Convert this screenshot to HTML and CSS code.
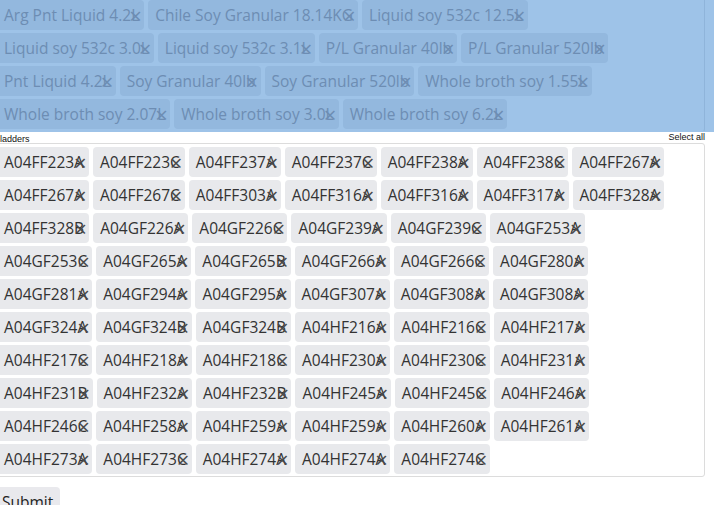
FILE: index.html
```html
<!DOCTYPE html>
<html lang="en">
<head>
<meta charset="utf-8">
<title>Products</title>
<link rel="stylesheet" href="styles.css">
</head>
<body>
<form class="page">
  <div class="picked">
    <div class="tagbox tagbox-picked">
      <span class="tag">Arg Pnt Liquid 4.2L<span class="x">×</span></span>
      <span class="tag">Chile Soy Granular 18.14KG<span class="x">×</span></span>
      <span class="tag">Liquid soy 532c 12.5L<span class="x">×</span></span>
      <span class="tag">Liquid soy 532c 3.0L<span class="x">×</span></span>
      <span class="tag">Liquid soy 532c 3.1L<span class="x">×</span></span>
      <span class="tag">P/L Granular 40lb<span class="x">×</span></span>
      <span class="tag">P/L Granular 520lb<span class="x">×</span></span>
      <span class="tag">Pnt Liquid 4.2L<span class="x">×</span></span>
      <span class="tag">Soy Granular 40lb<span class="x">×</span></span>
      <span class="tag">Soy Granular 520lb<span class="x">×</span></span>
      <span class="tag">Whole broth soy 1.55L<span class="x">×</span></span>
      <span class="tag">Whole broth soy 2.07L<span class="x">×</span></span>
      <span class="tag">Whole broth soy 3.0L<span class="x">×</span></span>
      <span class="tag">Whole broth soy 6.2L<span class="x">×</span></span>
    </div>
  </div>

  <div class="field-head">
    <span class="field-label">ladders</span>
    <a class="select-all">Select all</a>
  </div>
  <div class="tagbox tagbox-ladders">
    <span class="tag">A04FF223A<span class="x">×</span></span>
    <span class="tag">A04FF223C<span class="x">×</span></span>
    <span class="tag">A04FF237A<span class="x">×</span></span>
    <span class="tag">A04FF237C<span class="x">×</span></span>
    <span class="tag">A04FF238A<span class="x">×</span></span>
    <span class="tag">A04FF238C<span class="x">×</span></span>
    <span class="tag">A04FF267A<span class="x">×</span></span>
    <span class="tag">A04FF267A<span class="x">×</span></span>
    <span class="tag">A04FF267C<span class="x">×</span></span>
    <span class="tag">A04FF303A<span class="x">×</span></span>
    <span class="tag">A04FF316A<span class="x">×</span></span>
    <span class="tag">A04FF316A<span class="x">×</span></span>
    <span class="tag">A04FF317A<span class="x">×</span></span>
    <span class="tag">A04FF328A<span class="x">×</span></span>
    <span class="tag">A04FF328B<span class="x">×</span></span>
    <span class="tag">A04GF226A<span class="x">×</span></span>
    <span class="tag">A04GF226C<span class="x">×</span></span>
    <span class="tag">A04GF239A<span class="x">×</span></span>
    <span class="tag">A04GF239C<span class="x">×</span></span>
    <span class="tag">A04GF253A<span class="x">×</span></span>
    <span class="tag">A04GF253C<span class="x">×</span></span>
    <span class="tag">A04GF265A<span class="x">×</span></span>
    <span class="tag">A04GF265B<span class="x">×</span></span>
    <span class="tag">A04GF266A<span class="x">×</span></span>
    <span class="tag">A04GF266C<span class="x">×</span></span>
    <span class="tag">A04GF280A<span class="x">×</span></span>
    <span class="tag">A04GF281A<span class="x">×</span></span>
    <span class="tag">A04GF294A<span class="x">×</span></span>
    <span class="tag">A04GF295A<span class="x">×</span></span>
    <span class="tag">A04GF307A<span class="x">×</span></span>
    <span class="tag">A04GF308A<span class="x">×</span></span>
    <span class="tag">A04GF308A<span class="x">×</span></span>
    <span class="tag">A04GF324A<span class="x">×</span></span>
    <span class="tag">A04GF324B<span class="x">×</span></span>
    <span class="tag">A04GF324B<span class="x">×</span></span>
    <span class="tag">A04HF216A<span class="x">×</span></span>
    <span class="tag">A04HF216C<span class="x">×</span></span>
    <span class="tag">A04HF217A<span class="x">×</span></span>
    <span class="tag">A04HF217C<span class="x">×</span></span>
    <span class="tag">A04HF218A<span class="x">×</span></span>
    <span class="tag">A04HF218C<span class="x">×</span></span>
    <span class="tag">A04HF230A<span class="x">×</span></span>
    <span class="tag">A04HF230C<span class="x">×</span></span>
    <span class="tag">A04HF231A<span class="x">×</span></span>
    <span class="tag">A04HF231B<span class="x">×</span></span>
    <span class="tag">A04HF232A<span class="x">×</span></span>
    <span class="tag">A04HF232B<span class="x">×</span></span>
    <span class="tag">A04HF245A<span class="x">×</span></span>
    <span class="tag">A04HF245C<span class="x">×</span></span>
    <span class="tag">A04HF246A<span class="x">×</span></span>
    <span class="tag">A04HF246C<span class="x">×</span></span>
    <span class="tag">A04HF258A<span class="x">×</span></span>
    <span class="tag">A04HF259A<span class="x">×</span></span>
    <span class="tag">A04HF259A<span class="x">×</span></span>
    <span class="tag">A04HF260A<span class="x">×</span></span>
    <span class="tag">A04HF261A<span class="x">×</span></span>
    <span class="tag">A04HF273A<span class="x">×</span></span>
    <span class="tag">A04HF273C<span class="x">×</span></span>
    <span class="tag">A04HF274A<span class="x">×</span></span>
    <span class="tag">A04HF274A<span class="x">×</span></span>
    <span class="tag">A04HF274C<span class="x">×</span></span>
  </div>

  <button type="button" class="submit">Submit</button>
</form>
</body>
</html>
```

FILE: styles.css
```css
html, body {
  margin: 0;
  padding: 0;
  background: #ffffff;
  overflow: hidden;
}

.page {
  width: 712px;
  margin: -3px 0 0 -7px;
  font-family: "Open Sans", "Noto Sans", sans-serif;
}

/* block of chosen products, shown highlighted */
.picked {
  background: #9ec3e8;
  width: 730px;
}

.tagbox {
  display: flex;
  flex-wrap: wrap;
  gap: 3px 4px;
  border: 1px solid #dcdcdc;
  border-radius: 3px;
  width: 712px;
  box-sizing: border-box;
}

.tagbox-picked {
  padding: 2px 70px 2px 3px;
  border-color: transparent #8fb4da transparent transparent;
}

.tagbox-ladders {
  padding: 3px 28px 2px 3px;
}

.tag {
  display: inline-flex;
  align-items: center;
  height: 30px;
  padding: 0 5px 0 7px;
  background: #e8e9ec;
  border-radius: 4px;
  color: #333333;
  font-size: 15.5px;
  line-height: 30px;
  white-space: nowrap;
}

.tagbox-picked .tag {
  background: #93b8de;
  color: #6d8db3;
}

/* remove cross, drawn over the end of the label */
.x {
  display: inline-block;
  width: 0;
  margin-left: -10px;
  margin-right: 10px;
  font-size: 22px;
  font-weight: 400;
  color: #4a4a4a;
  line-height: 30px;
}

.tagbox-picked .x {
  color: #6d8db3;
}

.field-head {
  display: flex;
  justify-content: space-between;
  height: 11px;
  padding-left: 7px;
  font-family: "Liberation Sans", Arial, sans-serif;
  font-size: 9px;
  line-height: 10px;
  color: #111111;
}

.field-label {
  align-self: flex-end;
  margin-bottom: -1px;
}

.select-all {
  align-self: flex-start;
  color: #111111;
}

.submit {
  margin: 10px 0 0 3px;
  padding: 0 7px 0 6px;
  height: 30px;
  border: none;
  border-radius: 4px;
  background: #e9e9ed;
  color: #222222;
  font-family: "Open Sans", "Noto Sans", sans-serif;
  font-size: 15.5px;
  line-height: 30px;
}
```
